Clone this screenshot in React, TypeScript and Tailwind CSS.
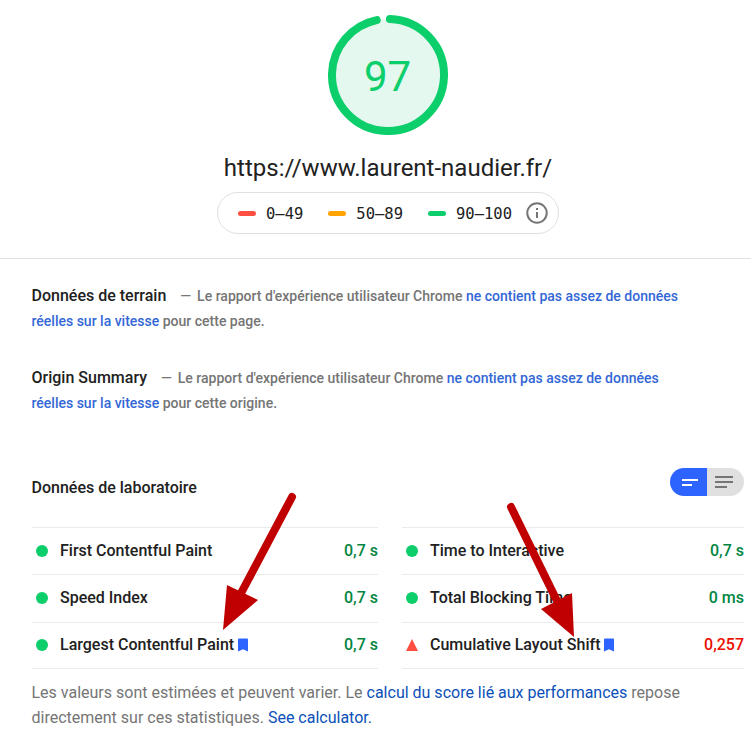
const Bookmark = () => (
  <svg viewBox="0 0 12 14" className="ml-[3px] h-[14px] w-[12px] shrink-0">
    <path d="M1 1.5a1 1 0 0 1 1-1h8a1 1 0 0 1 1 1V13.5L6 11.3 1 13.5z" fill="#2d64ff" />
  </svg>
);

type Metric = {
  name: string;
  value: string;
  bad?: boolean;
  saved?: boolean;
};

const leftMetrics: Metric[] = [
  { name: "First Contentful Paint", value: "0,7 s" },
  { name: "Speed Index", value: "0,7 s" },
  { name: "Largest Contentful Paint", value: "0,7 s", saved: true },
];

const rightMetrics: Metric[] = [
  { name: "Time to Interactive", value: "0,7 s" },
  { name: "Total Blocking Time", value: "0 ms" },
  { name: "Cumulative Layout Shift", value: "0,257", bad: true, saved: true },
];

const MetricRow = ({ metric }: { metric: Metric }) => (
  <div className="flex h-[47.33px] items-center border-b border-[#ebebeb] pb-[1px] pl-1 text-[16px] font-medium last:h-[46.67px]">
    {metric.bad ? (
      <svg viewBox="0 0 12 12" className="h-3 w-3 shrink-0">
        <path d="M6 0 12 12H0z" fill="#ff4e42" />
      </svg>
    ) : (
      <span className="h-3 w-3 shrink-0 rounded-full bg-[#0cce6b]" />
    )}
    <span className="ml-3 text-[#212121]">{metric.name}</span>
    {metric.saved && <Bookmark />}
    <span className={`ml-auto ${metric.bad ? "text-[#eb0f00]" : "text-[#018642]"}`}>{metric.value}</span>
  </div>
);

const MetricColumn = ({ metrics }: { metrics: Metric[] }) => (
  <div className="border-t border-[#ebebeb]">
    {metrics.map((m) => (
      <MetricRow key={m.name} metric={m} />
    ))}
  </div>
);

const Legend = ({ color, label }: { color: string; label: string }) => (
  <div className="flex items-center gap-[10px]">
    <span className={`h-[5px] w-[18px] rounded-full ${color}`} />
    <span className="pt-[3px]">{label}</span>
  </div>
);

const Gauge = () => (
  <svg viewBox="0 0 120 120" className="h-[120px] w-[120px]">
    <circle cx="60" cy="60" r="56" fill="#e5f8ef" />
    <circle
      cx="60"
      cy="60"
      r="56"
      fill="none"
      stroke="#0cce6b"
      strokeWidth="8"
      strokeLinecap="round"
      strokeDasharray="337.9 351.9"
      transform="rotate(-88 60 60)"
    />
    <text x="59.5" y="75.5" textAnchor="middle" fontSize="42" fill="#0cce6b" fontFamily="Roboto, sans-serif">
      97
    </text>
  </svg>
);

const Summary = ({ title, ending }: { title: string; ending: string }) => (
  <p className="-ml-[0.5px] whitespace-nowrap">
    <span className="mr-[14px] text-[16px] text-[#212121]">{title}</span>
    <span className="mr-[6px]">—</span>
    <span>Le rapport d'expérience utilisateur Chrome </span>
    <span className="text-[#3367d6]">ne contient pas assez de données</span>
    <br />
    <span className="text-[#3367d6]">réelles sur la vitesse</span>
    <span> {ending}</span>
  </p>
);

export default function App() {
  return (
    <div className="relative h-[745px] w-[751px] overflow-hidden bg-white font-['Roboto',sans-serif]">
      <div className="flex flex-col items-center pt-[15px] pl-[25px]">
        <Gauge />
        <div className="mt-[17px] text-[24px] leading-[32px] text-[#212121]">https://www.laurent-naudier.fr/</div>
        <div className="mt-[8px] flex h-[42px] w-[342px] items-center rounded-[21px] border border-[#e0e0e0] pl-[20px] font-['DejaVu_Sans_Mono',monospace] text-[15.5px] text-[#212121]">
          <Legend color="bg-[#ff4e42]" label="0–49" />
          <div className="ml-[25px]">
            <Legend color="bg-[#ffa400]" label="50–89" />
          </div>
          <div className="ml-[25px]">
            <Legend color="bg-[#0cce6b]" label="90–100" />
          </div>
          <svg viewBox="0 0 24 24" className="ml-[13px] h-6 w-6" fill="none">
            <circle cx="12" cy="12" r="9.75" stroke="#757575" strokeWidth="2" />
            <path d="M12 11v6M12 7v2" stroke="#757575" strokeWidth="2" />
          </svg>
        </div>
      </div>

      <div className="mt-6 border-t border-[#e0e0e0] px-[32px] pt-[24px] text-[14px] font-medium leading-[25px] text-[#757575]">
        <Summary title="Données de terrain" ending="pour cette page." />
        <div className="mt-[31px]">
          <Summary title="Origin Summary" ending="pour cette origine." />
        </div>

        <div className="mt-[59px] flex items-start justify-between">
          <h2 className="-ml-[0.5px] text-[16px] font-medium text-[#212121]">Données de laboratoire</h2>
          <div className="-mt-[7px] -mr-[25px] flex h-7 w-[74px] overflow-hidden rounded-full">
            <div className="flex w-[37px] flex-col justify-center gap-[3px] bg-[#2d64ff] pl-3">
              <span className="h-[2px] w-4 bg-white" />
              <span className="h-[2px] w-[10px] bg-white" />
            </div>
            <div className="flex flex-1 flex-col justify-center gap-[3px] bg-[#e0e0e0] pl-2">
              <span className="h-[2px] w-[18px] bg-[#757575]" />
              <span className="h-[2px] w-[18px] bg-[#757575]" />
              <span className="h-[2px] w-[12px] bg-[#757575]" />
            </div>
          </div>
        </div>

        <div className="-mr-[25px] mt-[27px] grid grid-cols-[346px_342px] gap-x-[24px]">
          <MetricColumn metrics={leftMetrics} />
          <MetricColumn metrics={rightMetrics} />
        </div>

        <p className="mt-[11px] -ml-[0.5px] text-[16px] font-normal leading-[25px] text-[#757575]">
          Les valeurs sont estimées et peuvent varier. Le{" "}
          <span className="text-[#0b4fb8]">calcul du score lié aux performances</span> repose
          <br />
          directement sur ces statistiques. <span className="text-[#0b4fb8]">See calculator.</span>
        </p>
      </div>

      {/* annotation arrows drawn over the screenshot */}
      <svg viewBox="0 0 751 745" className="pointer-events-none absolute top-0 left-0 h-[745px] w-[751px]">
        <path d="M292 497 239 597" stroke="#c00000" strokeWidth="8" strokeLinecap="round" fill="none" />
        <path d="M223 630 227 585 258 600z" fill="#c00000" />
        <path d="M511 507 558 603" stroke="#c00000" strokeWidth="8" strokeLinecap="round" fill="none" />
        <path d="M574 637 541 609 572 593z" fill="#c00000" />
      </svg>
    </div>
  );
}
